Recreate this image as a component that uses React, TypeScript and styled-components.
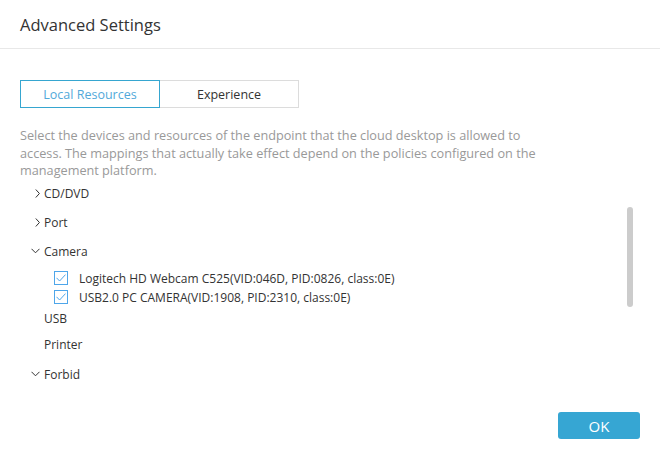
import React, { useState } from "react";
import styled, { createGlobalStyle } from "styled-components";

const GlobalStyle = createGlobalStyle`
  html, body {
    margin: 0;
    padding: 0;
    background: #ffffff;
  }
  body {
    font-family: "Open Sans", "Noto Sans", "Liberation Sans", sans-serif;
    color: #333333;
  }
`;

const Dialog = styled.div`
  width: 660px;
  height: 460px;
  background: #ffffff;
  display: flex;
  flex-direction: column;
  box-sizing: border-box;
`;

const Header = styled.div`
  height: 49px;
  border-bottom: 1px solid #e8e8e8;
  display: flex;
  align-items: center;
  padding: 0 20px;
  box-sizing: border-box;
`;

const Title = styled.div`
  font-size: 16.5px;
  color: #333333;
`;

const Body = styled.div`
  flex: 1;
  display: flex;
  flex-direction: column;
  padding: 31px 20px 0 20px;
  min-height: 0;
`;

const Tabs = styled.div`
  display: flex;
`;

const Tab = styled.button<{ $active?: boolean }>`
  width: ${(p) => (p.$active ? "140px" : "139px")};
  height: 28px;
  box-sizing: border-box;
  background: #ffffff;
  border: ${(p) => (p.$active ? "1.5px solid #36a6d0" : "1px solid #dcdcdc")};
  border-left: ${(p) => (p.$active ? "1.5px solid #36a6d0" : "none")};
  font-family: inherit;
  font-size: 12.5px;
  color: ${(p) => (p.$active ? "#52a9da" : "#333333")};
  padding: 0;
  cursor: pointer;
`;

const Content = styled.div`
  display: flex;
  margin-top: 19px;
  min-height: 0;
`;

const Main = styled.div`
  flex: 1;
`;

const Description = styled.p`
  margin: 0;
  font-size: 12.7px;
  line-height: 17.5px;
  color: #999999;
  max-width: 535px;
`;

const Tree = styled.div`
  margin-top: -1px;
`;

const NodeRow = styled.div<{ $h: number }>`
  height: ${(p) => p.$h}px;
  display: flex;
  align-items: center;
  font-size: 12px;
  color: #333333;
`;

const Arrow = styled.span`
  width: 24px;
  display: flex;
  justify-content: flex-end;
  padding-right: 4px;
  box-sizing: border-box;
`;

const Children = styled.div`
  margin-top: 3px;
`;

const ChildRow = styled.label`
  height: 19px;
  display: flex;
  align-items: center;
  padding-left: 34px;
  font-size: 12px;
  color: #333333;
  gap: 11px;
`;

const Box = styled.span`
  width: 14px;
  height: 14px;
  box-sizing: border-box;
  border: 1px solid #4ea6ea;
  display: flex;
  align-items: center;
  justify-content: center;
`;

const ScrollTrack = styled.div`
  width: 6px;
  margin-right: 7px;
  padding-top: 80px;
`;

const ScrollThumb = styled.div`
  height: 100px;
  border-radius: 3px;
  background: #cccccc;
`;

const Footer = styled.div`
  display: flex;
  justify-content: flex-end;
  padding: 0 20px 21px 20px;
`;

const OkButton = styled.button`
  width: 82px;
  height: 27px;
  border: none;
  border-radius: 3px;
  background: #36a6d3;
  color: #ffffff;
  font-family: inherit;
  font-size: 15px;
  padding: 0;
  cursor: pointer;
`;

const Chevron = ({ open }: { open?: boolean }) =>
  open ? (
    <svg width="9" height="6" viewBox="0 0 9 6">
      <polyline points="0.5,0.8 4.5,4.8 8.5,0.8" fill="none" stroke="#333" strokeWidth="1" />
    </svg>
  ) : (
    <svg width="5" height="9" viewBox="0 0 5 9">
      <polyline points="0.8,0.5 4.4,4.5 0.8,8.5" fill="none" stroke="#333" strokeWidth="1" />
    </svg>
  );

const Check = () => (
  <Box>
    <svg width="10" height="8" viewBox="0 0 10 8">
      <polyline points="0.5,3.8 3.6,7 9.5,0.6" fill="none" stroke="#4ea6ea" strokeWidth="1" />
    </svg>
  </Box>
);

type Node = { name: string; arrow?: "right" | "down"; h: number; children?: string[] };

const nodes: Node[] = [
  { name: "CD/DVD", arrow: "right", h: 29 },
  { name: "Port", arrow: "right", h: 29 },
  {
    name: "Camera",
    arrow: "down",
    h: 29,
    children: [
      "Logitech HD Webcam C525(VID:046D, PID:0826, class:0E)",
      "USB2.0 PC CAMERA(VID:1908, PID:2310, class:0E)",
    ],
  },
  { name: "USB", h: 23 },
  { name: "Printer", h: 29 },
  { name: "Forbid", arrow: "down", h: 31 },
];

export default function App() {
  const [tab, setTab] = useState(0);
  return (
    <>
      <GlobalStyle />
      <Dialog>
        <Header>
          <Title>Advanced Settings</Title>
        </Header>
        <Body>
          <Tabs>
            <Tab $active={tab === 0} onClick={() => setTab(0)}>
              Local Resources
            </Tab>
            <Tab $active={tab === 1} onClick={() => setTab(1)}>
              Experience
            </Tab>
          </Tabs>
          <Content>
            <Main>
              <Description>
                Select the devices and resources of the endpoint that the cloud desktop is allowed to
                access. The mappings that actually take effect depend on the policies configured on the
                management platform.
              </Description>
              <Tree>
                {nodes.map((n) => (
                  <React.Fragment key={n.name}>
                    <NodeRow $h={n.h}>
                      <Arrow>{n.arrow && <Chevron open={n.arrow === "down"} />}</Arrow>
                      {n.name}
                    </NodeRow>
                    {n.children && (
                      <Children>
                        {n.children.map((c) => (
                          <ChildRow key={c}>
                            <Check />
                            {c}
                          </ChildRow>
                        ))}
                      </Children>
                    )}
                  </React.Fragment>
                ))}
              </Tree>
            </Main>
            <ScrollTrack>
              <ScrollThumb />
            </ScrollTrack>
          </Content>
        </Body>
        <Footer>
          <OkButton>OK</OkButton>
        </Footer>
      </Dialog>
    </>
  );
}
